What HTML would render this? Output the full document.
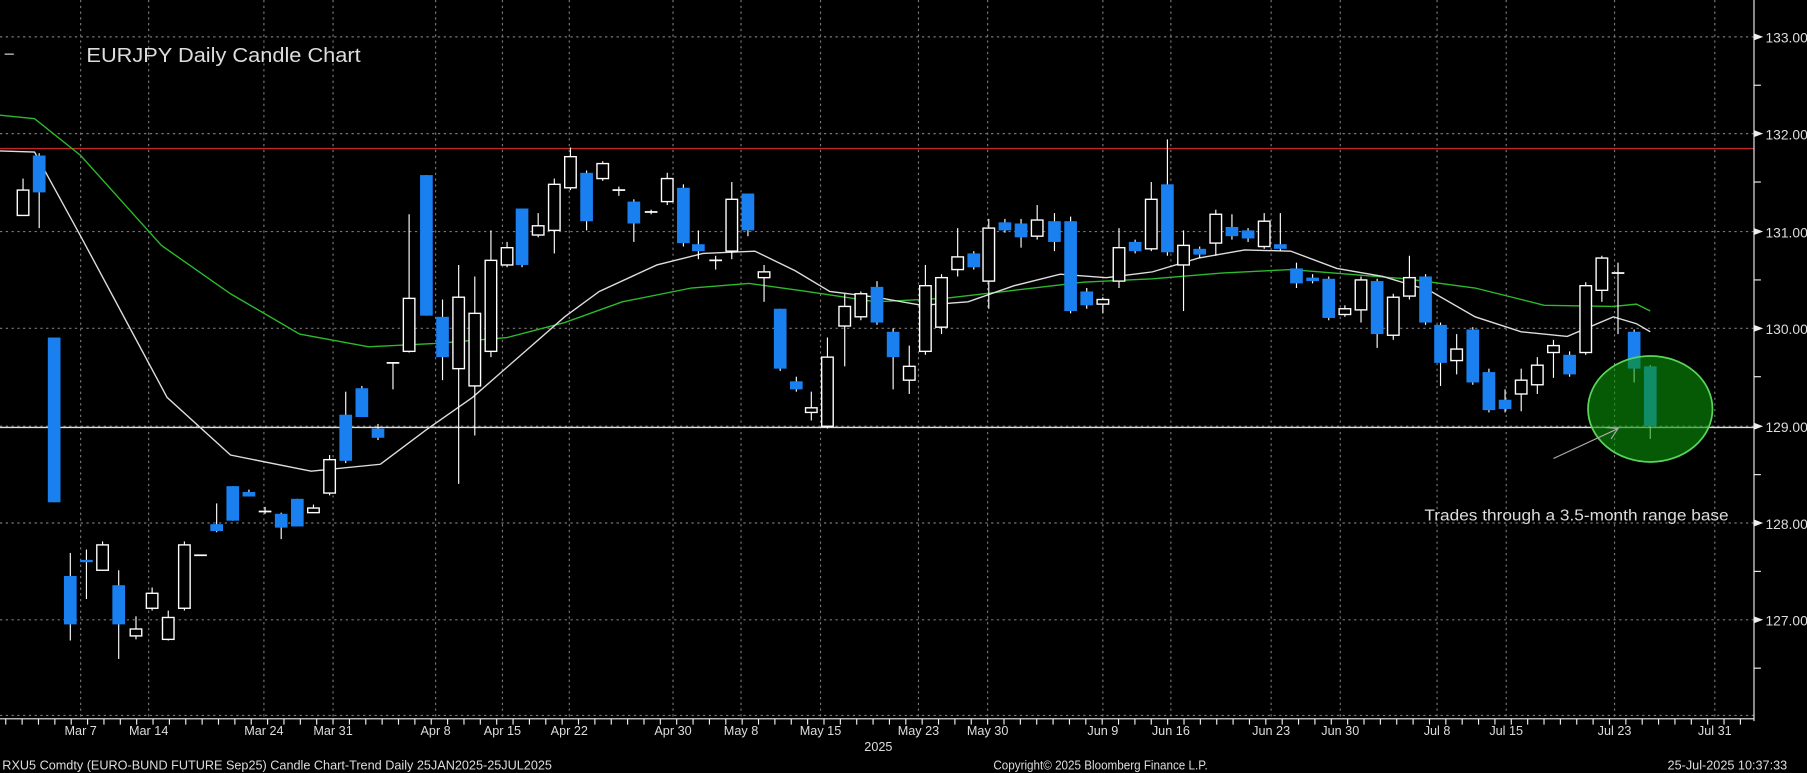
<!DOCTYPE html>
<html><head><meta charset="utf-8"><style>
html,body{margin:0;padding:0;background:#000;overflow:hidden}
svg{display:block}
text{font-family:"Liberation Sans",sans-serif;fill:#ddd}
</style></head><body>
<svg id="s" width="1807" height="773" viewBox="0 0 1568 671" preserveAspectRatio="none" xmlns="http://www.w3.org/2000/svg">
<rect width="1568" height="671" fill="#000"/>
<g id="grid" stroke="#777" stroke-width="1" stroke-dasharray="2,3"></g>
<line x1="0" y1="129" x2="1522" y2="129" stroke="#c0282a" stroke-width="1.2"/>
<line x1="0" y1="371" x2="1522" y2="371" stroke="#ddd" stroke-width="1.2"/>
<polyline fill="none" stroke="#2cba2c" stroke-width="1.2" points="0,100 30,103 70,135 140,213 200,255 260,290 320,301 380,298 440,293 490,280 540,262 600,250 650,246 700,253 760,262 820,259 880,252 940,245 1000,242 1060,237 1120,234 1170,238 1220,242 1280,250 1340,265 1400,266 1420,264 1432,270"/>
<polyline fill="none" stroke="#ddd" stroke-width="1.2" points="0,131 30,132 70,205 145,345 200,395 270,409 330,403 370,373 410,345 450,310 490,275 520,253 570,230 610,220 655,218 690,235 720,253 760,258 800,265 840,262 880,248 920,238 960,241 1000,236 1040,224 1080,217 1120,218 1160,233 1200,240 1240,252 1280,275 1320,288 1360,292 1400,275 1420,281 1432,288"/>
<g id="c"></g>
<ellipse cx="1432" cy="355" rx="54" ry="46" fill="rgba(10,150,10,0.6)" stroke="#5ad55a" stroke-width="1.5"/>
<line x1="1348" y1="398" x2="1404" y2="372" stroke="#aaa" stroke-width="1"/>
<polyline points="1393,371 1404,372 1398,381" fill="none" stroke="#aaa" stroke-width="1"/>
<text x="1236" y="452" font-size="14" textLength="264" lengthAdjust="spacingAndGlyphs">Trades through a 3.5-month range base</text>
<line x1="4" y1="47" x2="12" y2="47" stroke="#ddd"/>
<text x="75" y="54" font-size="18" textLength="238" lengthAdjust="spacingAndGlyphs">EURJPY Daily Candle Chart</text>
<line x1="1522" y1="0" x2="1522" y2="626" stroke="#eee" stroke-width="1"/>
<line x1="0" y1="624" x2="1522" y2="624" stroke="#eee" stroke-width="1"/>
<g id="ax"></g>
<text x="750" y="652" font-size="11">2025</text>
<text x="2" y="668" font-size="11">RXU5 Comdty (EURO-BUND FUTURE  Sep25) Candle Chart-Trend  Daily 25JAN2025-25JUL2025</text>
<text x="862" y="668" font-size="11" textLength="186" lengthAdjust="spacingAndGlyphs">Copyright© 2025 Bloomberg Finance L.P.</text>
<text x="1447" y="668" font-size="11">25-Jul-2025 10:37:33</text>
</svg>
<script>
var NS="http://www.w3.org/2000/svg";
function el(p,t,a){var e=document.createElementNS(NS,t);for(var k in a)e.setAttribute(k,a[k]);document.getElementById(p).appendChild(e);return e;}
var prices=[[133,32],[132,116],[131,201],[130,285],[129,370],[128,454],[127,538]];
prices.forEach(function(p){el("grid","line",{x1:0,y1:p[1],x2:1522,y2:p[1]});
 var t=el("ax","text",{x:1532,y:p[1]+5,"font-size":12});t.textContent=p[0].toFixed(2);
 el("ax","polygon",{points:(1522)+","+(p[1]-3)+" 1530,"+p[1]+" 1522,"+(p[1]+3),fill:"#eee"});
 el("ax","line",{x1:1522,y1:p[1]+42,x2:1528,y2:p[1]+42,stroke:"#eee"});});
el("grid","line",{x1:0,y1:621,x2:1522,y2:621});
var dates=[["Mar 7",70],["Mar 14",129],["Mar 24",229],["Mar 31",289],["Apr 8",378],["Apr 15",436],["Apr 22",494],["Apr 30",584],["May 8",643],["May 15",712],["May 23",797],["May 30",857],["Jun 9",957],["Jun 16",1016],["Jun 23",1103],["Jun 30",1163],["Jul 8",1247],["Jul 15",1307],["Jul 23",1401],["Jul 31",1488]];
dates.forEach(function(d){el("grid","line",{x1:d[1],y1:0,x2:d[1],y2:624});
 var t=el("ax","text",{x:d[1],y:638,"font-size":11,"text-anchor":"middle"});t.textContent=d[0];});
for(var x=5;x<1522;x+=14.2){el("ax","line",{x1:x,y1:624,x2:x,y2:629,stroke:"#eee"});}
var C=[[20,165,187,155,187,'h'],[34,135,167,133,198,'b'],[47,293,436,293,436,'b'],[61,500,542,480,556,'b'],[75,486,488,477,520,'b'],[89,473,495,470,495,'h'],[103,508,542,495,572,'b'],[118,546,552,535,555,'h'],[132,515,528,510,530,'h'],[146,536,555,530,556,'h'],[160,473,528,470,530,'h'],[174,482,482,482,482,'d'],[188,455,461,437,462,'b'],[202,422,452,422,452,'b'],[216,427,431,425,431,'b'],[230,444,444,440,446,'d'],[244,446,458,445,468,'b'],[258,433,457,433,457,'b'],[272,441,445,438,445,'h'],[286,399,428,395,430,'h'],[300,360,400,340,402,'b'],[314,337,362,335,362,'b'],[328,372,380,368,382,'b'],[341,315,315,315,338,'d'],[355,259,305,186,306,'h'],[370,152,274,152,274,'b'],[384,275,310,260,330,'b'],[398,258,320,230,420,'h'],[412,272,335,240,378,'h'],[426,226,305,200,310,'h'],[440,215,230,210,232,'h'],[453,181,230,181,232,'b'],[467,196,204,185,206,'h'],[481,160,200,155,220,'h'],[495,136,163,128,165,'h'],[509,150,192,148,200,'b'],[523,142,155,140,157,'h'],[537,165,165,162,170,'d'],[550,175,194,173,210,'b'],[565,184,184,182,186,'d'],[579,155,175,150,178,'h'],[593,163,211,160,214,'b'],[606,212,218,200,225,'b'],[621,226,226,222,234,'d'],[635,173,218,158,225,'h'],[649,168,200,168,205,'b'],[663,236,241,230,262,'h'],[677,268,320,268,322,'b'],[691,331,338,327,340,'b'],[704,354,358,340,365,'h'],[718,310,370,293,372,'h'],[733,266,283,255,318,'h'],[747,255,275,253,278,'h'],[761,249,280,244,282,'b'],[775,288,310,285,338,'b'],[789,318,330,300,342,'h'],[803,248,305,230,308,'h'],[817,241,284,238,290,'h'],[831,223,234,198,240,'h'],[845,220,232,218,234,'b'],[858,198,244,190,268,'h'],[872,193,200,190,202,'b'],[886,194,206,190,215,'b'],[900,191,205,178,208,'h'],[915,192,210,185,218,'b'],[929,192,270,188,272,'b'],[943,253,265,250,268,'b'],[957,260,264,258,272,'h'],[971,215,244,198,250,'h'],[985,210,218,208,220,'b'],[999,173,216,158,218,'h'],[1013,160,219,121,222,'b'],[1027,213,230,200,270,'h'],[1041,216,221,214,224,'b'],[1055,186,211,182,222,'h'],[1069,197,205,186,208,'b'],[1083,200,207,198,210,'b'],[1097,192,214,185,216,'h'],[1111,212,216,185,218,'b'],[1125,233,246,228,250,'b'],[1139,241,244,238,246,'b'],[1153,242,276,240,278,'b'],[1167,268,273,265,275,'h'],[1181,243,269,240,280,'h'],[1195,244,290,242,302,'b'],[1209,258,291,255,295,'h'],[1223,241,257,222,260,'h'],[1237,240,280,238,282,'b'],[1250,282,315,280,335,'b'],[1264,303,313,290,325,'h'],[1278,286,332,284,334,'b'],[1292,323,356,320,358,'b'],[1306,347,355,338,358,'b'],[1320,330,342,320,357,'h'],[1334,317,334,310,342,'h'],[1348,300,306,295,328,'h'],[1362,308,325,305,327,'b'],[1376,248,306,245,308,'h'],[1390,224,252,222,262,'h'],[1404,237,237,228,290,'d'],[1418,288,320,286,332,'b'],[1432,318,370,317,381,'b']];
C.forEach(function(c){var x=c[0],w=11;
 el("c","line",{x1:x,y1:c[3],x2:x,y2:c[4],stroke:"#fff","stroke-width":1});
 if(c[5]=='d'){el("c","line",{x1:x-5.5,y1:c[1],x2:x+5.5,y2:c[1],stroke:"#fff","stroke-width":1.5});return;}
 var h=Math.max(2,c[2]-c[1]);
 if(c[5]=='h')el("c","rect",{x:x-5,y:c[1],width:10,height:h,fill:"#000",stroke:"#fff","stroke-width":1.2});
 else el("c","rect",{x:x-w/2,y:c[1],width:w,height:h,fill:"#1a80f0"});
});
</script>
</body></html>
